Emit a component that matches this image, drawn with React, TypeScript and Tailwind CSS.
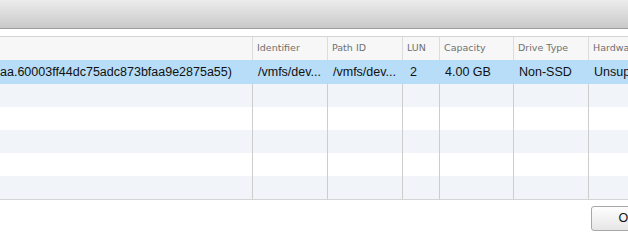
import React from "react";

const cols = [
  { label: "", w: "w-[252px]" },
  { label: "Identifier", w: "w-[75px]" },
  { label: "Path ID", w: "w-[75px]" },
  { label: "LUN", w: "w-[37px]" },
  { label: "Capacity", w: "w-[74px]" },
  { label: "Drive Type", w: "w-[75px]" },
  { label: "Hardware Acceleration", w: "w-[80px]" },
];

const selected = [
  "aa.60003ff44dc75adc873bfaa9e2875a55)",
  "/vmfs/dev...",
  "/vmfs/dev...",
  "2",
  "4.00 GB",
  "Non-SSD",
  "Unsupported",
];

const App = () => {
  return (
    <div
      className="w-[628px] h-[243px] overflow-hidden bg-white"
      style={{ fontFamily: '"Liberation Sans", Arial, sans-serif' }}
    >
      {/* dialog title strip */}
      <div className="h-[29px] bg-gradient-to-b from-[#ececec] to-[#c9c9c9] border-b border-[#9c9c9c]" />

      <div className="pt-[7px]">
        <div className="border-t border-b border-[#d4d4d4] overflow-hidden">
          {/* header */}
          <div className="flex h-[23px] bg-[#f7f7f7] whitespace-nowrap">
            {cols.map((c, i) => (
              <div
                key={i}
                className={`${c.w} shrink-0 flex items-center pl-[4px] text-[9.5px] text-[#707070] overflow-hidden ${
                  i > 0 ? "border-l border-[#dcdcdc]" : ""
                }`}
                style={{ fontFamily: '"DejaVu Sans", Tahoma, sans-serif' }}
              >
                {c.label}
              </div>
            ))}
          </div>

          {/* selected row */}
          <div className="flex h-[24px] bg-[#b7ddf8] whitespace-nowrap text-[12.5px] text-[#111]">
            {cols.map((c, i) => (
              <div
                key={i}
                className={`${c.w} shrink-0 flex items-center overflow-hidden ${
                  i === 0 ? "pl-0" : i === 3 ? "pl-[8px]" : "pl-[6px]"
                }`}
              >
                {selected[i]}
              </div>
            ))}
          </div>

          {/* empty rows */}
          {[0, 1, 2, 3, 4].map((r) => (
            <div
              key={r}
              className={`flex h-[23px] ${r % 2 === 0 ? "bg-[#f1f5fa]" : "bg-white"}`}
            >
              {cols.map((c, i) => (
                <div
                  key={i}
                  className={`${c.w} shrink-0 ${i > 0 ? "border-l border-[#cdcdcd]" : ""}`}
                />
              ))}
            </div>
          ))}
        </div>

        {/* footer */}
        <div className="flex justify-end pt-[6px]">
          <div className="mr-[-36px] w-[73px] h-[25px] rounded-[3px] border border-[#a8a8a8] bg-gradient-to-b from-[#fefefe] to-[#e6e6e6] flex items-center justify-center text-[12.5px] text-[#111]">
            OK
          </div>
        </div>
      </div>
    </div>
  );
};

export default App;
